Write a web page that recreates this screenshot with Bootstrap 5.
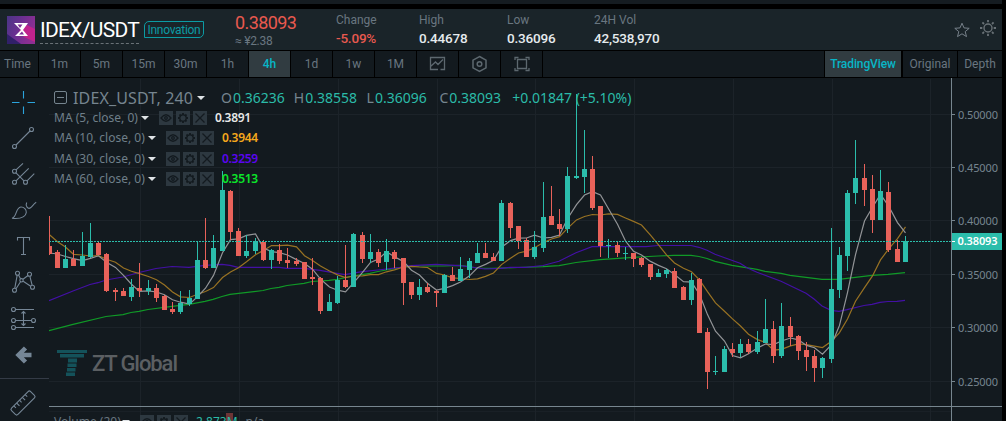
<!DOCTYPE html>
<html lang="en">
  <head>
    <meta charset="UTF-8" />
    <meta name="viewport" content="width=device-width, initial-scale=1" />
    <title>IDEX/USDT</title>
    <link
      href="https://cdn.jsdelivr.net/npm/bootstrap@5.3.0/dist/css/bootstrap.min.css"
      rel="stylesheet"
    />
    <style>
      body {
        height: 421px;
        background-color: #000;
        font-family: Roboto, "Liberation Sans", sans-serif;
        font-size: 12px;
        line-height: 1;
        color: #697680;
      }
      .page {
        width: 1002px;
        height: 421px;
      }
      .top-strip {
        height: 4px;
        margin-bottom: 5px;
        width: 1006px;
        background-color: #151c21;
      }
      /* ticker header */
      .ticker {
        height: 41px;
        background-color: #1a2429;
      }
      .coin-logo {
        margin: 7px 5px 0 7px;
      }
      .pair-name {
        width: 99px;
        height: 31px;
        margin-top: 4px;
        padding-top: 7px;
        font-size: 21px;
        letter-spacing: -0.7px;
        color: #fff;
        border-bottom: 1px dashed #6a7277;
      }
      .tag-innovation {
        width: 60px;
        height: 17px;
        margin: 12px 0 0 5px;
        padding-top: 2px;
        border: 1px solid #0c9ba4;
        border-radius: 5px 0;
        color: #0c9ba4;
        letter-spacing: -0.3px;
      }
      .stats {
        display: grid;
        grid-template-columns: 101px 83px 88px 87px 90px;
        margin-left: 31px;
      }
      .last-price {
        font-size: 18px;
        letter-spacing: -0.6px;
        padding-top: 5px;
        height: 26px;
      }
      .fiat-price {
        letter-spacing: -0.3px;
      }
      .stat-label {
        padding-top: 5px;
        height: 23px;
      }
      .stat-value {
        font-size: 13.5px;
        font-weight: 500;
        letter-spacing: -0.2px;
        color: #e6ebee;
      }
      .down {
        color: #e8594f !important;
      }
      /* interval bar */
      .intervals {
        height: 26px;
        margin: 1px 0;
        background-color: #131a1f;
      }
      .interval {
        width: 42px;
        border-right: 1px solid #000;
      }
      .interval:first-child {
        width: 39px;
        padding-right: 3px;
      }
      .selected {
        background-color: #313c41;
        color: #08b5c6;
        font-weight: 500;
      }
      .view-tabs > div {
        width: 55px;
        border-right: 1px solid #000;
      }
      .view-tabs > div:first-child {
        width: 79px;
        letter-spacing: -0.1px;
        border-left: 1px solid #000;
        border-right-width: 2px;
      }
      .view-tabs > div:last-child {
        width: 44px;
        border-right: 0;
      }
      /* chart */
      .workspace {
        height: 343px;
        background-color: #131a1f;
      }
      .tools {
        width: 49px;
        padding-top: 6px;
      }
      .tools svg {
        display: block;
        width: 49px;
        height: 36px;
        fill: none;
        stroke: #758696;
        stroke-width: 1.1;
      }
      .tools .divider {
        height: 1px;
        margin: 6px 0;
        background-color: #343b46;
      }
      .chart text {
        font-family: "Noto Sans", sans-serif;
        font-size: 11px;
        fill: #76858f;
      }
      .chart .brand-text {
        font-family: Roboto, sans-serif;
        font-size: 22px;
        font-weight: 500;
        fill: #5b5f62;
      }
      .legend {
        left: 6px;
        top: 0;
        font-family: "Noto Sans", sans-serif;
        color: #6f7f89;
      }
      .legend-title {
        height: 30px;
        padding-top: 9px;
        font-size: 14px;
        color: #76858f;
      }
      .symbol {
        width: 120px;
        margin-left: 5px;
        font-size: 16px;
        letter-spacing: 0.15px;
      }
      .ohlc {
        width: 72.8px;
      }
      .ohlc .up {
        margin-left: 1px;
      }
      .up {
        color: #2bbba8;
      }
      .study {
        height: 20.3px;
      }
      .study-name {
        width: 94px;
        font-size: 12px;
      }
      .study-name.short {
        width: 87px;
      }
      .caret {
        border: 4px solid transparent;
        border-top-color: #dfe3e6;
        border-bottom: 0;
      }
      .study-btns {
        margin: 0 8px 0 10px;
      }
      .study-value {
        font-size: 12px;
        font-weight: 600;
        letter-spacing: -0.3px;
      }
      .volume-row {
        left: 6px;
        top: 334px;
        font-family: "Noto Sans", sans-serif;
      }
      .volume-row .study-name {
        width: 68px;
      }
    </style>
  </head>
  <body class="overflow-hidden">
    <svg width="0" height="0" class="position-absolute">
      <symbol id="btns" viewBox="0 0 48 14">
        <path d="M0 0h14v14H0zM17 0h14v14H17zM34 0h14v14H34z" fill="#2d3840" />
        <g fill="none" stroke="#131a1f" stroke-width="1.3">
          <path d="M2 7q5-6.500 10 0q-5 6.500-10 0z" />
          <circle cx="7" cy="7" r="1.300" />
          <circle cx="24" cy="7" r="3.200" />
          <path d="M24 2v2M24 10v2M19 7h2M27 7h2M20.500 3.500l1.300 1.300M26.200 9.200l1.300 1.300M20.500 10.500l1.300-1.300M26.200 4.800l1.300-1.300" stroke-width="1.800" />
          <path d="M36.500 2.500l9 9M45.500 2.500l-9 9" />
        </g>
      </symbol>
    </svg>

    <div class="page d-flex flex-column overflow-hidden">
      <div class="top-strip flex-shrink-0"></div>

      <header class="ticker d-flex align-items-start flex-shrink-0">
        <svg class="coin-logo flex-shrink-0" width="28" height="28" viewBox="0 0 28 28">
          <defs>
            <linearGradient id="logoBg" x1="0" y1="0" x2="1" y2="0.4">
              <stop offset="0" stop-color="#4a3585" />
              <stop offset="0.5" stop-color="#6b2f91" />
              <stop offset="1" stop-color="#8d2f92" />
            </linearGradient>
          </defs>
          <path d="M0 0h28v28H0z" fill="url(#logoBg)" />
          <path d="M20 9l8 4v13l-11-5-5-6z" fill="#d0208c" opacity=".8" />
          <path d="M0 18l14 10H0z" fill="#31206a" />
          <path d="M7 7h14l-5 7 5 6H8l6-6z" fill="#fff" />
          <path d="M10.500 8.500h5l-2.500 3.500zM12 18.500l3-3 2 3z" fill="#7b2f96" />
        </svg>
        <div class="pair-name text-nowrap">IDEX/USDT</div>
        <div class="tag-innovation text-center text-nowrap">Innovation</div>
        <div class="stats">
          <div>
            <div class="last-price down">0.38093</div>
            <div class="fiat-price">≈ ¥2.38</div>
          </div>
          <div>
            <div class="stat-label">Change</div>
            <div class="stat-value down">-5.09%</div>
          </div>
          <div>
            <div class="stat-label">High</div>
            <div class="stat-value">0.44678</div>
          </div>
          <div>
            <div class="stat-label">Low</div>
            <div class="stat-value">0.36096</div>
          </div>
          <div>
            <div class="stat-label">24H Vol</div>
            <div class="stat-value">42,538,970</div>
          </div>
        </div>
        <svg class="ms-auto" width="50" height="41" viewBox="952 9 50 41" fill="none" stroke="#77818a">
          <path d="M962 23.200l2 4.700 5.200.4-4 3.300 1.300 5-4.500-2.800-4.500 2.800 1.300-5-4-3.300 5.200-.4z" />
          <circle cx="988" cy="28" r="4" stroke="#697176" stroke-width="1.400" />
          <path d="M988 20v2.300M988 33.700V36M980 28h2.300M993.700 28h2.300M982.400 22.400l1.600 1.600M992 32l1.600 1.600M982.400 33.600l1.600-1.600M992 24l1.600-1.600" stroke="#697176" stroke-width="1.800" />
        </svg>
      </header>

      <nav class="intervals d-flex flex-shrink-0 text-center">
        <div class="interval d-flex align-items-center justify-content-center">Time</div>
        <div class="interval d-flex align-items-center justify-content-center">1m</div>
        <div class="interval d-flex align-items-center justify-content-center">5m</div>
        <div class="interval d-flex align-items-center justify-content-center">15m</div>
        <div class="interval d-flex align-items-center justify-content-center">30m</div>
        <div class="interval d-flex align-items-center justify-content-center">1h</div>
        <div class="interval d-flex align-items-center justify-content-center selected">4h</div>
        <div class="interval d-flex align-items-center justify-content-center">1d</div>
        <div class="interval d-flex align-items-center justify-content-center">1w</div>
        <div class="interval d-flex align-items-center justify-content-center">1M</div>
        <div class="interval">
          <svg width="41" height="26" fill="none" stroke="#5d686f" stroke-width="1.300">
            <path d="M19.500 18.500H13.500V6.500h14v12h-4M13.500 15.500l5-4.500 2.500 2.500 5-5M17 18.500h4" />
          </svg>
        </div>
        <div class="interval">
          <svg width="41" height="26" fill="none" stroke="#5d686f" stroke-width="1.500">
            <path d="M20.500 5.500l6.500 3.700v7.600l-6.500 3.700-6.500-3.700V9.200z" />
            <circle cx="20.500" cy="13" r="2.300" />
          </svg>
        </div>
        <div class="interval">
          <svg width="41" height="26" fill="none" stroke="#5d686f" stroke-width="1.300">
            <path d="M16.500 8.500h9v9h-9zM14 9V6.500h3.500M24.500 6.500H28V9M28 17v2.500h-3.500M17.500 19.500H14V17" />
          </svg>
        </div>
        <div class="view-tabs d-flex ms-auto">
          <div class="selected d-flex align-items-center justify-content-center">TradingView</div>
          <div class="d-flex align-items-center justify-content-center">Original</div>
          <div class="d-flex align-items-center justify-content-center">Depth</div>
        </div>
      </nav>

      <main class="workspace d-flex position-relative overflow-hidden">
        <div class="tools flex-shrink-0">
          <svg viewBox="0 0 49 36"><path d="M23.500 7v7.500M23.500 22.500V30M12 18.500h7.500M27.500 18.500H35" stroke="#2ba4dc" /></svg>
          <svg viewBox="0 0 49 36">
            <circle cx="14.500" cy="26.500" r="2" /><circle cx="31.500" cy="9.500" r="2" />
            <path d="M16 25L30 11" />
          </svg>
          <svg viewBox="0 0 49 36">
            <circle cx="14.500" cy="15.300" r="2" /><circle cx="14.500" cy="26.300" r="2" /><circle cx="25.500" cy="26.300" r="2" />
            <path d="M16 13.800l7-6.500M16 24.800l12.700-12.500M27 24.800l7.300-7.100M16 16.800l8 8" />
          </svg>
          <svg viewBox="0 0 49 36">
            <path d="M12 26.300C17 25 15.500 15.500 20.800 15C24 14.800 26.700 17.500 26.300 20.500C25.700 25 20 27 12 26.300zM26.700 10.500C25 14 28 17.500 30.500 15.800C32 14.800 33.500 12 36.200 10.300" />
          </svg>
          <svg viewBox="0 0 49 36"><path d="M17.500 12.500v-3h12v3M23.500 9.500v17M21 26.500h5" /></svg>
          <svg viewBox="0 0 49 36">
            <circle cx="17.500" cy="9.300" r="2" /><circle cx="29.500" cy="10.300" r="2" /><circle cx="21.500" cy="16.300" r="1.700" />
            <circle cx="14.500" cy="26.300" r="2" /><circle cx="32.500" cy="23.300" r="2" />
            <path d="M14.800 24.200l2.400-13M18.500 11l2 3.700M23 15.200l5-3.700M29.900 12.400l2.200 8.800M16 24.700l4.500-7M23.200 17.200l7.500 5" />
          </svg>
          <svg viewBox="0 0 49 36">
            <circle cx="13.500" cy="9.500" r="2" /><circle cx="13.500" cy="20.500" r="2" /><circle cx="33.500" cy="20.500" r="2" /><circle cx="13.500" cy="27.500" r="2" />
            <path d="M15.500 9.500H34M15.500 20.500h16M15.500 27.500H34M23.500 11.500v14M21.500 13.500l2-2 2 2M21.500 23.500l2 2 2-2" />
          </svg>
          <svg viewBox="0 0 49 36"><path d="M25.500 12L18.500 19L25.500 26M19 19H31.500" stroke-width="4.500" /></svg>
          <div class="divider"></div>
          <svg viewBox="0 0 49 36">
            <g transform="rotate(-45 23 18)">
              <rect x="9.500" y="13.500" width="27" height="9" rx="1.800" />
              <path d="M14.500 13.500v3M18.500 13.500v4M22.500 13.500v3M26.500 13.500v4M30.500 13.500v3" />
            </g>
          </svg>
        </div>

        <svg id="chart" class="chart flex-shrink-0" width="953" height="343" viewBox="49 78 953 343"></svg>

        <div class="position-absolute top-0 start-0 ms-5">
          <div class="legend position-relative">
            <div class="legend-title d-flex align-items-center text-nowrap">
              <svg width="14" height="14" fill="none" stroke="#76858f">
                <rect x="0.500" y="0.500" width="12" height="12" rx="1.500" />
                <path d="M3 6.500h7" />
              </svg>
              <span class="symbol">IDEX_USDT, 240</span>
              <span class="caret ms-1 me-3"></span>
              <span class="ohlc">O<span class="up">0.36236</span></span>
              <span class="ohlc">H<span class="up">0.38558</span></span>
              <span class="ohlc">L<span class="up">0.36096</span></span>
              <span class="ohlc">C<span class="up">0.38093</span></span>
              <span class="up">+0.01847 (+5.10%)</span>
            </div>
            <div class="study d-flex align-items-center text-nowrap">
              <span class="study-name short">MA (5, close, 0)</span>
              <span class="caret"></span>
              <svg class="study-btns" width="48" height="14"><use href="#btns" /></svg>
              <span class="study-value" style="color: #e8e8e8">0.3891</span>
            </div>
            <div class="study d-flex align-items-center text-nowrap">
              <span class="study-name">MA (10, close, 0)</span>
              <span class="caret"></span>
              <svg class="study-btns" width="48" height="14"><use href="#btns" /></svg>
              <span class="study-value" style="color: #f5a81c">0.3944</span>
            </div>
            <div class="study d-flex align-items-center text-nowrap">
              <span class="study-name">MA (30, close, 0)</span>
              <span class="caret"></span>
              <svg class="study-btns" width="48" height="14"><use href="#btns" /></svg>
              <span class="study-value" style="color: #5a05f0">0.3259</span>
            </div>
            <div class="study d-flex align-items-center text-nowrap">
              <span class="study-name">MA (60, close, 0)</span>
              <span class="caret"></span>
              <svg class="study-btns" width="48" height="14"><use href="#btns" /></svg>
              <span class="study-value" style="color: #0be52a">0.3513</span>
            </div>
          </div>
        </div>

        <div class="volume-row position-absolute ms-5 d-flex align-items-center text-nowrap">
          <span class="study-name">Volume (20)</span>
          <span class="caret"></span>
          <svg class="study-btns" width="48" height="20" viewBox="0 -3 48 20"><use href="#btns" width="48" height="14" /></svg>
          <span class="up me-2">2.873M</span>
          <span>n/a</span>
        </div>
      </main>
    </div>

    <script src="https://cdn.jsdelivr.net/npm/bootstrap@5.3.0/dist/js/bootstrap.bundle.min.js"></script>

    <script>
      const UP = "#2bbdab";
      const DOWN = "#e8625a";

      // x, high, body top, body bottom, low, 1 = up / 0 = down
      const candles = [
        [49, 216, 246, 254, 255, 0], [57, 250, 252, 268, 268, 0], [65, 245, 259, 268, 268, 1],
        [73, 250, 259, 266, 266, 0], [82, 232, 256, 266, 266, 1], [90, 223, 243, 257, 258, 1],
        [98, 242, 243, 255, 255, 0], [106, 253, 254, 291, 292, 0], [115, 288, 290, 292, 301, 0],
        [123, 288, 291, 296, 296, 0], [131, 279, 287, 297, 301, 1], [139, 263, 288, 291, 297, 0],
        [148, 280, 288, 291, 295, 1], [156, 284, 288, 298, 302, 0], [164, 295, 296, 310, 310, 0],
        [172, 302, 309, 312, 314, 0], [180, 291, 303, 312, 314, 1], [189, 290, 298, 304, 306, 1],
        [197, 241, 260, 299, 299, 1], [205, 218, 260, 268, 269, 0], [213, 235, 248, 268, 268, 1],
        [222, 171, 190, 251, 251, 1], [230, 190, 191, 232, 240, 0], [238, 228, 231, 256, 256, 0],
        [246, 235, 251, 256, 258, 1], [255, 238, 241, 251, 254, 1], [263, 240, 242, 260, 261, 0],
        [271, 249, 250, 260, 269, 1], [279, 244, 250, 261, 264, 0], [287, 248, 260, 263, 268, 0],
        [296, 258, 261, 264, 266, 0], [304, 262, 262, 279, 279, 0], [312, 258, 277, 279, 285, 0],
        [320, 277, 278, 311, 314, 0], [329, 294, 302, 311, 311, 1], [337, 276, 280, 303, 304, 1],
        [345, 245, 280, 287, 288, 0], [353, 233, 234, 287, 287, 1], [362, 232, 235, 259, 263, 0],
        [370, 234, 252, 259, 263, 1], [378, 249, 252, 263, 267, 0], [386, 239, 251, 262, 270, 1],
        [394, 250, 252, 259, 268, 0], [403, 258, 258, 283, 305, 0], [411, 282, 282, 295, 299, 0],
        [419, 279, 287, 295, 300, 1], [427, 283, 287, 292, 293, 0], [436, 290, 291, 293, 307, 0],
        [444, 274, 275, 293, 293, 1], [452, 267, 275, 281, 281, 0], [460, 257, 269, 281, 281, 1],
        [469, 258, 261, 270, 278, 1], [477, 243, 253, 263, 263, 1], [485, 243, 253, 258, 258, 0],
        [493, 253, 257, 261, 261, 0], [501, 200, 203, 261, 261, 1], [510, 202, 203, 228, 238, 0],
        [518, 226, 226, 241, 249, 0], [526, 238, 240, 257, 257, 0], [534, 231, 247, 257, 259, 1],
        [543, 182, 217, 248, 252, 1], [551, 186, 216, 225, 225, 0], [559, 209, 224, 229, 236, 0],
        [567, 167, 176, 229, 233, 1], [576, 94, 176, 178, 179, 1], [584, 130, 169, 177, 193, 1],
        [592, 156, 169, 208, 210, 0], [600, 206, 206, 246, 257, 0], [608, 239, 245, 246, 258, 1],
        [617, 242, 245, 253, 257, 0], [625, 247, 253, 254, 260, 1], [633, 253, 253, 259, 267, 0],
        [641, 257, 258, 265, 267, 0], [650, 264, 264, 277, 280, 0], [658, 269, 273, 277, 277, 1],
        [666, 269, 270, 274, 278, 1], [674, 268, 271, 288, 288, 0], [683, 286, 287, 300, 300, 0],
        [691, 273, 280, 300, 305, 1], [699, 278, 279, 333, 333, 0], [707, 328, 332, 372, 389, 0],
        [715, 356, 371, 372, 375, 1], [724, 346, 349, 372, 372, 1], [732, 343, 349, 353, 357, 0],
        [740, 339, 344, 353, 357, 1], [748, 339, 344, 352, 354, 0], [757, 331, 342, 352, 354, 1],
        [765, 299, 329, 343, 343, 1], [773, 321, 329, 356, 363, 0], [781, 303, 326, 356, 358, 1],
        [790, 317, 326, 337, 346, 0], [798, 335, 336, 351, 360, 0], [806, 342, 350, 357, 371, 0],
        [814, 350, 356, 368, 382, 0], [822, 357, 358, 368, 378, 1], [831, 228, 289, 359, 363, 1],
        [839, 247, 255, 290, 298, 1], [847, 190, 193, 256, 271, 1], [855, 140, 178, 193, 204, 1],
        [864, 164, 178, 190, 206, 0], [872, 175, 189, 220, 233, 0], [880, 170, 191, 220, 220, 1],
        [888, 182, 192, 250, 252, 0], [897, 240, 249, 262, 262, 0], [905, 236, 241, 262, 262, 1],
      ];

      const ma30 = "49,300.7 73,291 90,284.500 98,282.700 106,280 123,277 139,272.500 156,268.500 172,266.500 189,267.300 205,265.300 222,264.300 230,265.300 238,267.400 279,267.400 287,268.300 304,268.300 320,270.300 337,273.300 345,274.700 362,271.700 378,270 400,267.300 411,265.700 436,264.300 460,265.700 485,269 501,268.300 510,267.300 526,267.300 543,265.500 559,261.300 576,252.700 592,246.700 646,246.700 658,245.500 691,245.500 699,247.300 707,250.300 715,254.300 740,263.300 748,268.300 757,272.300 781,281.300 806,293.300 814,299 822,306 831,310.300 839,311.300 847,309.700 864,305.500 872,304.300 880,302.300 888,301.500 897,301.300 905,300.300";
      const ma60 = "49,330.7 73,324.300 106,316.500 123,314.700 131,312.500 139,311.300 148,309.500 172,306.300 189,304.300 205,301.300 213,299.300 222,296.500 230,294.300 263,290.500 271,288.500 279,287.300 287,285.500 304,283.300 312,281.500 329,280.300 337,279.300 353,276 370,273.300 378,271.500 403,267 419,266 444,266 460,265.400 469,266.500 477,268 493,268.300 518,267.500 543,266.700 559,265.700 576,262.500 600,259.700 633,257.300 658,256 674,255.400 691,255.400 699,256.500 707,258.500 715,261.300 732,265.300 757,269.300 765,271.300 781,273.300 790,275.300 806,277.300 822,279.400 839,279.400 847,278.300 872,275.300 888,274.300 905,272.700";

      const closes = candles.map((c) => (c[5] ? c[2] : c[3]));

      // first points come from history that is off screen
      function movingAverage(length, seed) {
        return candles
          .map((c, i) => {
            let y = seed[i];
            if (i >= length - 1) {
              y = closes.slice(i - length + 1, i + 1).reduce((a, b) => a + b, 0) / length;
            }
            return c[0] + 0.5 + "," + y;
          })
          .join(" ");
      }

      const line = (points, color) =>
        `<polyline points="${points}" fill="none" stroke="${color}" stroke-width="1.2"/>`;
      const rect = (x, y, w, h, color) =>
        `<rect x="${x}" y="${y}" width="${w}" height="${h}" fill="${color}"/>`;

      let out = "";
      const rows = [114, 167, 220, 274, 327, 381];
      rows.forEach((y) => (out += rect(49, y, 902, 1, "#1c2329")));
      out += rect(49, 411, 902, 1, "#192026");
      [140, 239, 338, 437, 535, 634, 733, 832, 930].forEach(
        (x) => (out += rect(x, 79, 1, 342, "#1c2329"))
      );

      // watermark
      out += rect(57, 350, 30, 3, "#14525a") + rect(60, 354, 24, 3.5, "#14525a");
      out += rect(68, 358.5, 9, 4, "#14525a") + rect(67.5, 363.5, 9, 3.5, "#14525a");
      out += rect(67, 368, 8.5, 3.5, "#14525a") + rect(66, 372.5, 9, 3.5, "#14525a");
      out += `<text class="brand-text" x="92" y="371" textLength="86">ZT Global</text>`;

      out += line(ma60, "#109a27");
      out += line(ma30, "#4310a5");
      out += line(movingAverage(10, [234.7, 241.7, 247, 254.3, 255, 256, 255.7, 259.3, 262.3]), "#987223");
      out += line(movingAverage(5, [253, 254, 256.5, 258.7]), "#929497");

      candles.forEach(([x, high, top, bottom, low, up]) => {
        const color = up ? UP : DOWN;
        out += rect(x, high, 1, low - high, color);
        out += rect(x - 2, top, 5, bottom - top, color);
      });
      out += rect(226, 413, 7, 8, "#6e3536");

      out += `<path d="M49 241.5H951" stroke="${UP}" stroke-dasharray="2 1"/>`;
      out += rect(49, 406, 953, 1, "#77868f") + rect(951, 78, 1, 343, "#77868f");
      rows.forEach((y, i) => {
        out += rect(951, y, 4, 1, "#77868f");
        out += `<text x="958" y="${y + 4.5}" textLength="40">${(0.5 - i * 0.05).toFixed(5)}</text>`;
      });
      out += rect(952, 233, 50, 17, UP) + rect(952, 241, 3, 1, "#fff");
      out += `<text x="957.5" y="245" textLength="40" style="fill: #fff; font-weight: 600">0.38093</text>`;

      document.getElementById("chart").innerHTML = out;
    </script>
  </body>
</html>
